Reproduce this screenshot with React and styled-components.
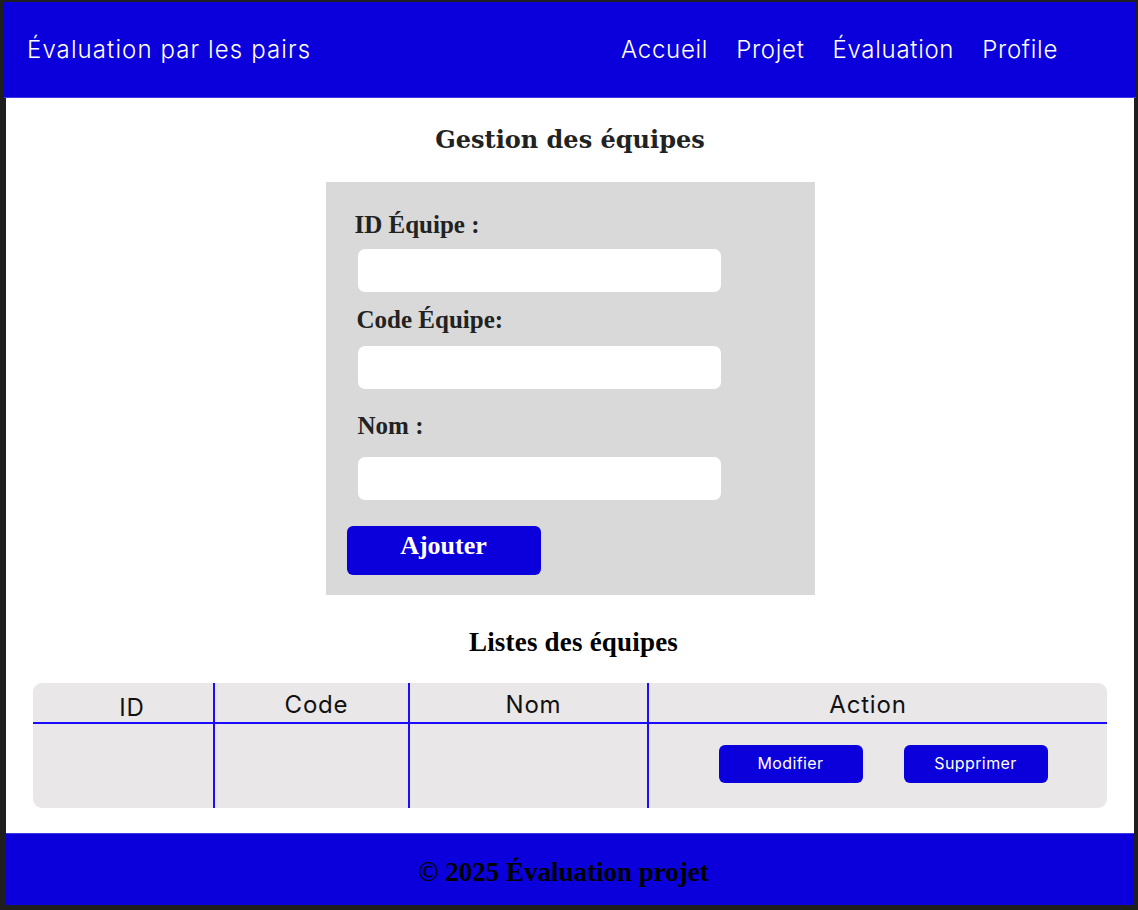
import React from "react";
import styled, { createGlobalStyle } from "styled-components";

const GlobalStyle = createGlobalStyle`
  html, body { margin: 0; padding: 0; background: #1e1e1e; }
  * { box-sizing: border-box; }
`;

const BLUE = "#0b00dc";
const LINE = "#1a0cff";

const Frame = styled.div`
  width: 1138px;
  height: 910px;
  padding: 2px 2px 5px 4px;
  display: flex;
  flex-direction: column;
`;

const Header = styled.header`
  height: 96px;
  background: ${BLUE};
  display: flex;
  align-items: center;
  justify-content: space-between;
  padding: 0 78px 0 23px;
  font-family: Inter, "Liberation Sans", sans-serif;
  color: #fff;
  border-bottom: 1px solid #3a3ae0;
`;

const Brand = styled.div`
  font-size: 24px;
  font-weight: 350;
  letter-spacing: 1.1px;
`;

const Nav = styled.nav`
  display: flex;
  gap: 28px;
`;

const NavLink = styled.a`
  font-size: 24px;
  font-weight: 350;
  letter-spacing: 0.7px;
  color: #fff;
  text-decoration: none;
`;

const Main = styled.main`
  flex: 1;
  margin: 0 2px;
  background: #fff;
  display: flex;
  flex-direction: column;
  align-items: center;
  padding: 28px 0 0;
`;

const Title = styled.h1`
  margin: 0;
  font-family: "DejaVu Serif", serif;
  font-weight: 700;
  font-size: 24px;
  line-height: 28px;
  color: #222;
`;

const FormCard = styled.form`
  margin-top: 28px;
  width: 489px;
  height: 413px;
  background: #d9d9d9;
  display: flex;
  flex-direction: column;
  align-items: flex-start;
  padding: 28px 0 0 31px;
`;

const Label = styled.label`
  font-family: "Liberation Serif", serif;
  font-weight: 700;
  font-size: 25px;
  line-height: 30px;
  color: #222;
  margin-top: ${(p) => p.$mt || 0}px;
  margin-left: ${(p) => p.$ml || 0}px;
`;

const Input = styled.input`
  width: 363px;
  height: 43px;
  border: none;
  border-radius: 7px;
  background: #fff;
  margin-top: ${(p) => p.$mt || 0}px;
  margin-left: 1px;
  outline: none;
`;

const AddButton = styled.button`
  margin-top: 26px;
  margin-left: -10px;
  width: 194px;
  height: 49px;
  background: ${BLUE};
  border: none;
  border-radius: 6px;
  color: #fff;
  font-family: "Liberation Serif", serif;
  font-weight: 700;
  font-size: 26px;
  display: flex;
  justify-content: center;
  align-items: center;
  padding: 0 0 10px;
`;

const ListTitle = styled.h2`
  margin: 31px 0 0;
  padding-left: 7px;
  font-family: "Liberation Serif", serif;
  font-weight: 700;
  font-size: 27px;
  line-height: 32px;
  letter-spacing: 0.2px;
  color: #000;
`;

const Table = styled.div`
  margin-top: 25px;
  width: 1074px;
  background: #e9e7e8;
  border-radius: 9px;
  display: grid;
  grid-template-columns: 182px 195px 239px 1fr;
  grid-template-rows: 41px 84px;
  font-family: Inter, "Liberation Sans", sans-serif;
`;

const HeadCell = styled.div`
  border-right: ${(p) => (p.$last ? "none" : `2px solid ${LINE}`)};
  border-bottom: 2px solid ${LINE};
  display: flex;
  justify-content: center;
  align-items: center;
  padding-top: ${(p) => p.$pt || 3}px;
  padding-left: ${(p) => Math.max(p.$dx || 0, 0) * 2}px;
  padding-right: ${(p) => Math.max(-(p.$dx || 0), 0) * 2}px;
  font-size: 24px;
  font-weight: 400;
  letter-spacing: 0.8px;
  color: #111;
`;

const BodyCell = styled.div`
  border-right: ${(p) => (p.$last ? "none" : `2px solid ${LINE}`)};
  display: flex;
  justify-content: center;
  align-items: flex-start;
  gap: 41px;
  padding: 21px 0 0 ${(p) => p.$pl || 0}px;
`;

const ActionButton = styled.button`
  width: 144px;
  height: 38px;
  background: ${BLUE};
  border: none;
  border-radius: 6px;
  color: #fff;
  font-family: Inter, "Liberation Sans", sans-serif;
  font-size: 16px;
  letter-spacing: 0.4px;
  padding: 0 0 2px;
`;

const Footer = styled.footer`
  height: 72px;
  margin: 0 2px;
  background: ${BLUE};
  display: flex;
  justify-content: center;
  align-items: center;
  padding: 6px 13px 0 0;
  font-family: "Liberation Serif", serif;
  font-weight: 700;
  font-size: 27px;
  color: #000;
  border-top: 1px solid #3a3ae0;
`;

export default function App() {
  return (
    <>
      <GlobalStyle />
      <Frame>
        <Header>
          <Brand>Évaluation par les pairs</Brand>
          <Nav>
            <NavLink>Accueil</NavLink>
            <NavLink>Projet</NavLink>
            <NavLink>Évaluation</NavLink>
            <NavLink>Profile</NavLink>
          </Nav>
        </Header>
        <Main>
          <Title>Gestion des équipes</Title>
          <FormCard onSubmit={(e) => e.preventDefault()}>
            <Label $ml={-2}>ID Équipe :</Label>
            <Input $mt={9} />
            <Label $mt={13}>Code Équipe:</Label>
            <Input $mt={11} />
            <Label $mt={22} $ml={1}>Nom :</Label>
            <Input $mt={16} />
            <AddButton type="submit">Ajouter</AddButton>
          </FormCard>
          <ListTitle>Listes des équipes</ListTitle>
          <Table>
            <HeadCell $pt={10} $dx={9}>ID</HeadCell>
            <HeadCell $dx={5}>Code</HeadCell>
            <HeadCell $dx={5}>Nom</HeadCell>
            <HeadCell $last $dx={-10}>Action</HeadCell>
            <BodyCell />
            <BodyCell />
            <BodyCell />
            <BodyCell $last $pl={10}>
              <ActionButton>Modifier</ActionButton>
              <ActionButton>Supprimer</ActionButton>
            </BodyCell>
          </Table>
        </Main>
        <Footer>© 2025 Évaluation projet</Footer>
      </Frame>
    </>
  );
}
